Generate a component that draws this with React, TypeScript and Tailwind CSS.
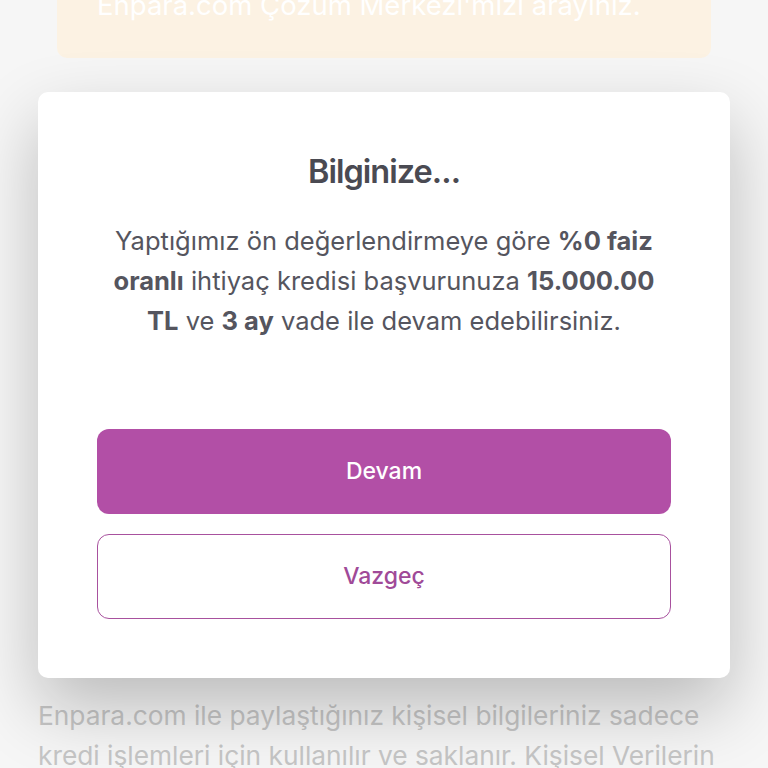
export default function App() {
  return (
    <div className="relative h-[768px] w-[768px] overflow-hidden bg-[#f6f6f6] font-['Inter',sans-serif]">
      {/* Page behind the modal */}
      <div className="flex h-full flex-col">
        <div className="mx-[57px] -mt-[40px] h-[98px] rounded-[10px] bg-[#fcf2e3] px-[40px] pt-[25px]">
          <p className="text-[27.5px] leading-[40px] text-white whitespace-nowrap">Enpara.com Çözüm Merkezi'mizi arayınız.</p>
        </div>
        <div className="mt-auto px-[38px]">
          <p className="translate-y-[8px] text-[26.3px] leading-[40px] text-[#c6c6c6] whitespace-nowrap">
            Enpara.com ile paylaştığınız kişisel bilgileriniz sadece
            <br />
            kredi işlemleri için kullanılır ve saklanır. Kişisel Verilerin
          </p>
        </div>
      </div>

      {/* Modal overlay */}
      <div className="absolute inset-0 flex justify-center pt-[92px]">
        <div className="h-[586px] w-[692px] rounded-[10px] bg-white px-[59px] pt-[60px] shadow-[0_30px_70px_rgba(0,0,0,0.24)]">
          <h2 className="text-center text-[32.5px] font-semibold leading-[40px] tracking-[-0.03em] text-[#4a4a52]">
            Bilginize...
          </h2>
          <p className="mt-[29px] text-center text-[25.5px] leading-[40px] text-[#55555e] whitespace-nowrap">
            Yaptığımız ön değerlendirmeye göre <span className="font-bold">%0 faiz</span>
            <br />
            <span className="font-bold">oranlı</span> ihtiyaç kredisi başvurunuza{' '}
            <span className="font-bold">15.000.00</span>
            <br />
            <span className="font-bold">TL</span> ve <span className="font-bold">3 ay</span> vade ile devam
            edebilirsiniz.
          </p>
          <div className="mt-[88px] flex flex-col gap-[20px]">
            <button className="h-[85px] w-full rounded-[12px] bg-[#b24fa6] text-[23px] font-medium text-white">
              Devam
            </button>
            <button className="h-[85px] w-full rounded-[12px] border-[1.5px] border-[#a8519e] bg-white text-[23px] font-medium text-[#a04a98]">
              Vazgeç
            </button>
          </div>
        </div>
      </div>
    </div>
  )
}
